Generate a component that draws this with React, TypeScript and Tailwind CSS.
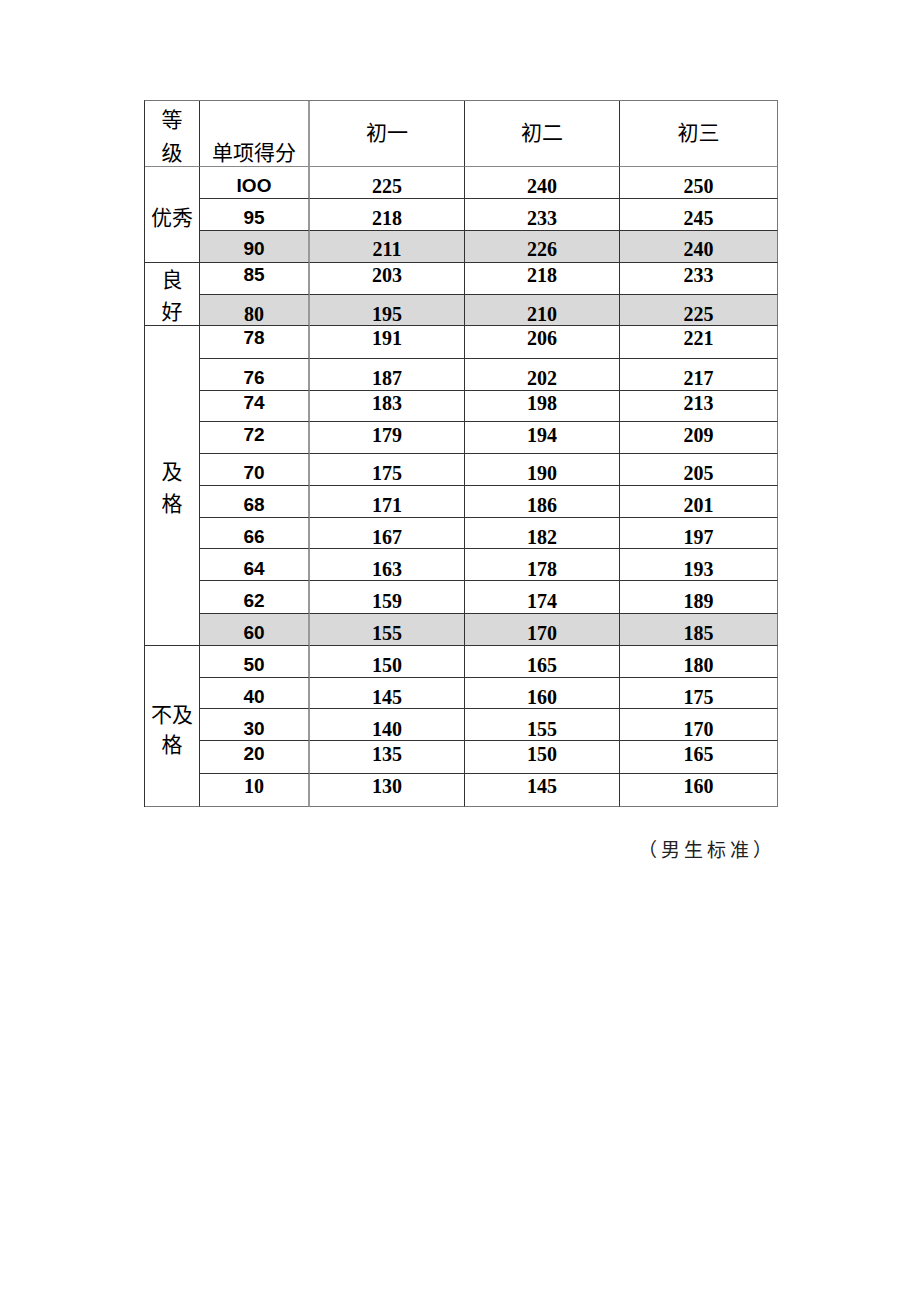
const cjk = "font-['Noto_Sans_CJK_SC',sans-serif]";
const serifNum = "font-['Liberation_Serif',serif] font-bold text-[20px] leading-[20px]";
const sansNum = "font-['Liberation_Sans',sans-serif] font-bold text-[19px] leading-[20px]";

type Row = {
  score: string;
  serif?: boolean;
  vals: [number, number, number];
  shade?: boolean;
  pt: string;
};

const rows: Row[] = [
  { score: "IOO", vals: [225, 240, 250], pt: "pt-[9px]" },
  { score: "95", vals: [218, 233, 245], pt: "pt-[9px]" },
  { score: "90", vals: [211, 226, 240], shade: true, pt: "pt-[8px]" },
  { score: "85", vals: [203, 218, 233], pt: "pt-[2px]" },
  { score: "80", serif: true, vals: [195, 210, 225], shade: true, pt: "pt-[9px]" },
  { score: "78", vals: [191, 206, 221], pt: "pt-[2px]" },
  { score: "76", vals: [187, 202, 217], pt: "pt-[9px]" },
  { score: "74", vals: [183, 198, 213], pt: "pt-[2px]" },
  { score: "72", vals: [179, 194, 209], pt: "pt-[3px]" },
  { score: "70", vals: [175, 190, 205], pt: "pt-[9px]" },
  { score: "68", vals: [171, 186, 201], pt: "pt-[9px]" },
  { score: "66", vals: [167, 182, 197], pt: "pt-[9px]" },
  { score: "64", vals: [163, 178, 193], pt: "pt-[10px]" },
  { score: "62", vals: [159, 174, 189], pt: "pt-[10px]" },
  { score: "60", vals: [155, 170, 185], shade: true, pt: "pt-[9px]" },
  { score: "50", vals: [150, 165, 180], pt: "pt-[9px]" },
  { score: "40", vals: [145, 160, 175], pt: "pt-[9px]" },
  { score: "30", vals: [140, 155, 170], pt: "pt-[10px]" },
  { score: "20", vals: [135, 150, 165], pt: "pt-[3px]" },
  { score: "10", serif: true, vals: [130, 145, 160], pt: "pt-[2px]" },
];

const cell = "border-r border-b border-[#333] flex justify-center";

export default function App() {
  return (
    <div className="min-h-[1301px] bg-white text-black pt-[100px]">
      <div className="ml-[144px] w-[634px] border-l border-t border-l-[#333] border-t-[#777] grid grid-cols-[55px_110px_155px_155px_158px] grid-rows-[66px_32px_32px_32px_32px_31px_33px_32px_31px_32px_32px_32px_31px_32px_33px_32px_32px_31px_32px_33px_33px]">
        {/* header */}
        <div className={`${cell} ${cjk} flex-col items-center pt-[2px] text-[21px] leading-[33px] border-b-[#888]`}>
          <span>等</span>
          <span>级</span>
        </div>
        <div className={`${cell} ${cjk} items-end pb-[3px] text-[21px] leading-[24px] border-b-[#888] border-r-2 border-r-[#999]`}>
          单项得分
        </div>
        {["初一", "初二", "初三"].map((t, i) => (
          <div
            key={t}
            className={`${cell} ${cjk} items-center pb-[6px] text-[21px] leading-[24px] border-b-[#888] ${i === 2 ? "border-r-[#777]" : ""}`}
          >
            {t}
          </div>
        ))}

        {/* grade groups */}
        <div className={`${cell} ${cjk} col-start-1 row-start-2 row-span-3 items-center text-[21px] leading-[24px]`}>
          <span className="pt-[2px]">优秀</span>
        </div>
        <div className={`${cell} ${cjk} col-start-1 row-start-5 row-span-2 flex-col items-center justify-center text-[21px] leading-[32px]`}>
          <span>良</span>
          <span>好</span>
        </div>
        <div className={`${cell} ${cjk} col-start-1 row-start-7 row-span-10 flex-col items-center justify-center text-[21px] leading-[32px]`}>
          <span>及</span>
          <span>格</span>
        </div>
        <div className={`${cell} ${cjk} col-start-1 row-start-17 row-span-5 flex-col items-center justify-center pt-[3px] text-[21px] leading-[30px] border-b-[#777]`}>
          <span>不及</span>
          <span>格</span>
        </div>

        {/* data */}
        {rows.map((r, ri) => {
          const last = ri === rows.length - 1;
          const bg = r.shade ? "bg-[#d9d9d9]" : "";
          const bottom = last ? "border-b-[#777]" : "";
          return [
            <div
              key={`s${ri}`}
              className={`${cell} ${bg} ${bottom} ${r.pt} ${r.serif ? serifNum : sansNum} border-r-2 border-r-[#999]`}
            >
              {r.score}
            </div>,
            ...r.vals.map((v, vi) => (
              <div
                key={`v${ri}-${vi}`}
                className={`${cell} ${bg} ${bottom} ${r.pt} ${serifNum} ${vi === 2 ? "border-r-[#777]" : ""}`}
              >
                {v}
              </div>
            )),
          ];
        })}
      </div>

      <div className={`${cjk} mt-[30px] pl-[638px] text-[19px] leading-[24px] tracking-[4px] text-[#222]`}>
        （男生标准）
      </div>
    </div>
  );
}
